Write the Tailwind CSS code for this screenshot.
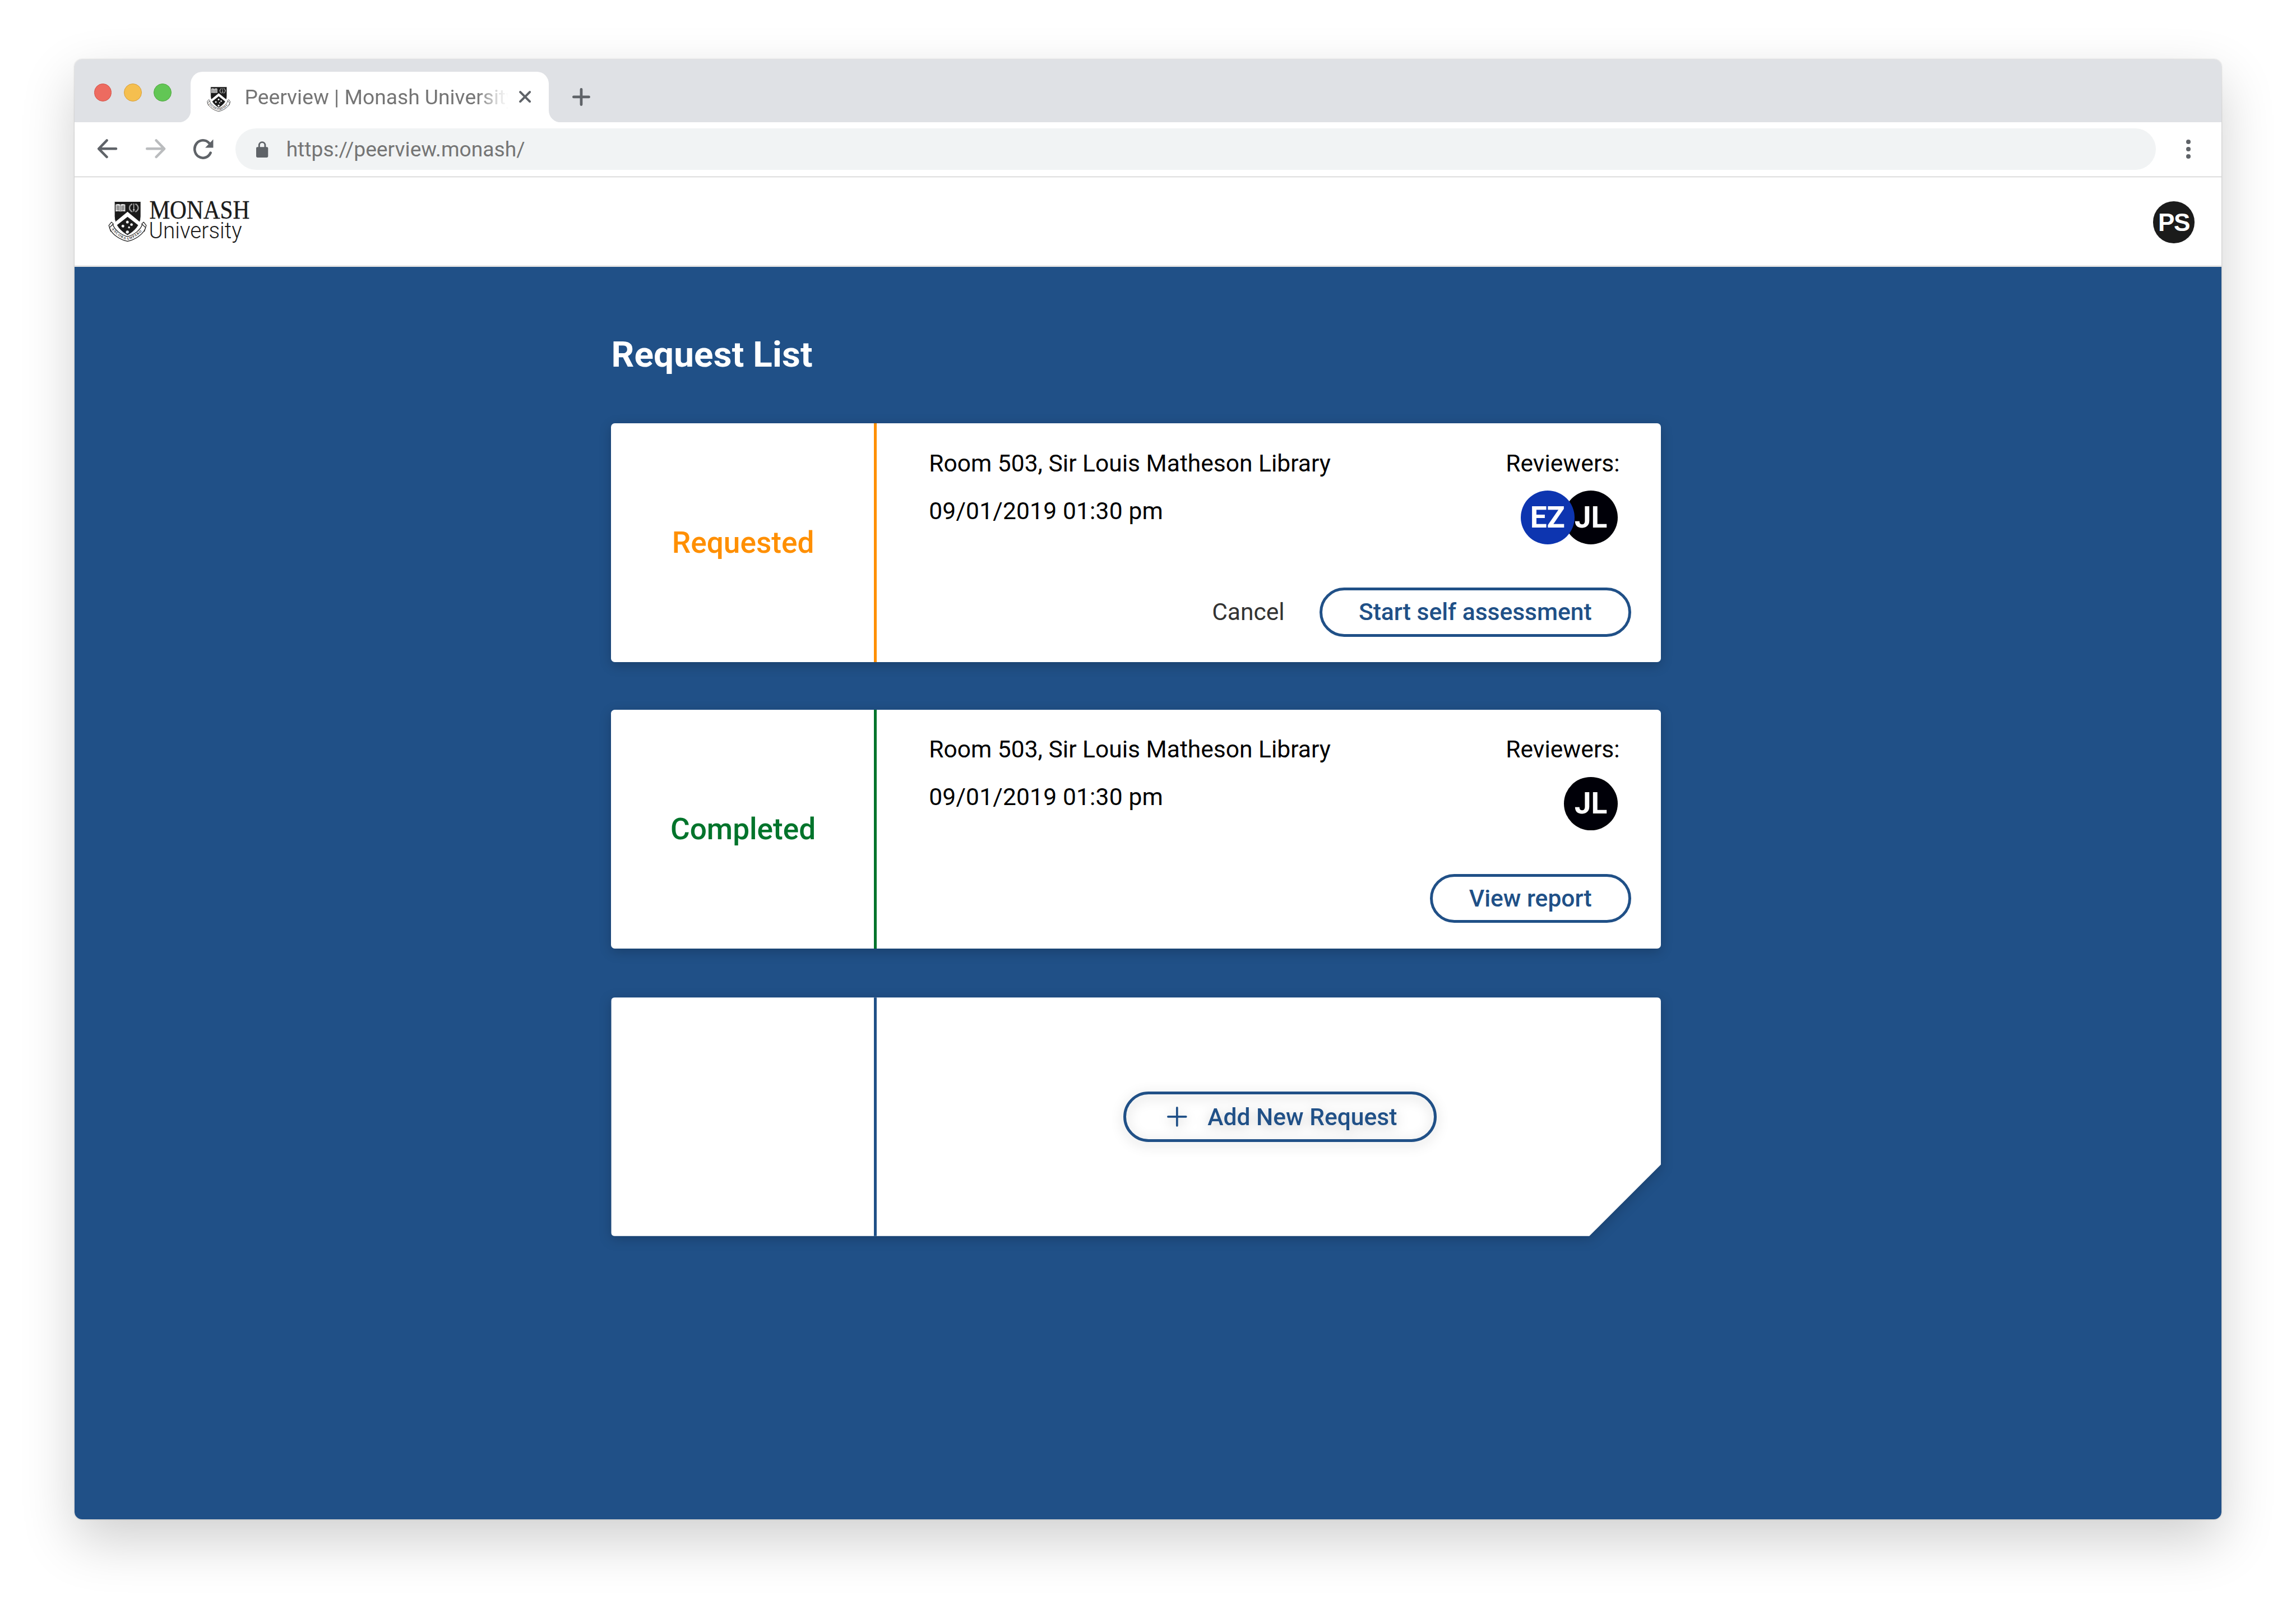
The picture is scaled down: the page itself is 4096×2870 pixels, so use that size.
<!DOCTYPE html>
<html lang="en">
<head>
<meta charset="utf-8">
<title>Peerview | Monash University</title>
<script src="https://cdn.jsdelivr.net/npm/@tailwindcss/browser@4"></script>
</head>
<body class="overflow-hidden bg-white">
<svg class="hidden">
  <defs>
    <clipPath id="shield-clip"><path d="M48 22H207V110C207 166 166 204 127 226C89 204 48 166 48 110Z"/></clipPath>
    <path id="motto-path" d="M27 180C42 214 88 244 127 254C166 244 212 214 227 180"/>
    <symbol id="crest" viewBox="0 0 252 276">
      <!-- motto ribbon -->
      <g fill="#fff" stroke="#1b1b1b" stroke-width="4" stroke-linejoin="round">
        <path d="M30 146L14 166L26 202L36 192L30 172L42 158Z"/><path d="M224 146L240 166L228 202L218 192L224 172L212 158Z"/>
        <path d="M18 180L38 160C48 194 90 224 127 234C164 224 206 194 216 160L236 180C222 222 170 254 127 262C84 254 32 222 18 180Z"/>
      </g>
      <text font-family="Liberation Serif, serif" font-weight="700" font-size="20" fill="#1b1b1b"><textPath href="#motto-path" startOffset="8" textLength="222">ANCORA·IMPARO</textPath></text>
      <!-- shield -->
      <path d="M48 22H207V110C207 166 166 204 127 226C89 204 48 166 48 110Z" fill="#1b1b1b" stroke="#fff" stroke-width="3"/>
      <path d="M127 84L212 154L193 166L127 114L61 166L42 154Z" fill="#fff" clip-path="url(#shield-clip)"/>
      <!-- book -->
      <path d="M55 40C66 36 78 37 84 41C90 37 102 36 113 40V82C102 79 90 80 84 83C78 80 66 79 55 82Z" fill="#e8e8e8"/>
      <path d="M84 41V83M60 47L79 50M60 53L79 56M60 59L79 62M60 65L79 68M60 71L79 74M89 50L108 47M89 56L108 53M89 62L108 59M89 68L108 65M89 74L108 71" stroke="#1b1b1b" stroke-width="2.4" fill="none"/>
      <!-- wreath and sword -->
      <path d="M155 38C134 44 133 76 156 83M175 38C196 44 197 76 174 83" fill="none" stroke="#ddd" stroke-width="8" stroke-dasharray="4 2.2"/>
      <path d="M165 34V76M159 72H171M165 76V84" stroke="#fff" stroke-width="3.4" fill="none"/>
      <!-- southern cross -->
      <g fill="#fff" stroke="#fff" stroke-width="4" stroke-dasharray="3 2">
        <circle cx="126" cy="146" r="7"/><circle cx="99" cy="170" r="7"/><circle cx="151" cy="161" r="6.5"/><circle cx="136" cy="178" r="4.5"/><circle cx="126" cy="206" r="8"/>
      </g>
    </symbol>
  </defs>
</svg>

<div class="h-[1079px] w-[1540px] [zoom:2.65974] bg-white px-[50px] pt-10 font-[Roboto,sans-serif]">
  <div class="flex h-[979px] w-[1440px] flex-col overflow-hidden rounded-[5px] bg-white shadow-[0_14px_36px_rgba(0,0,0,0.19),0_0_1px_rgba(0,0,0,0.25)]">

    <!-- tab strip -->
    <div class="flex h-[42px] shrink-0 bg-[#dfe1e5]">
      <div class="flex w-[78px] gap-2 pt-4 pl-[13px]">
        <span class="size-3 rounded-full border-[0.5px] border-[#d55349] bg-[#ed6b60]"></span>
        <span class="size-3 rounded-full border-[0.5px] border-[#d8a03c] bg-[#f5bf4f]"></span>
        <span class="size-3 rounded-full border-[0.5px] border-[#52a842] bg-[#62c655]"></span>
      </div>
      <div class="relative mt-2 flex h-[34px] w-60 items-center rounded-t-lg bg-white">
        <svg class="absolute bottom-0 -left-2 size-2" viewBox="0 0 8 8"><path d="M8 0V8H0A8 8 0 0 0 8 0Z" fill="#fff"/></svg>
        <svg class="absolute -right-2 bottom-0 size-2" viewBox="0 0 8 8"><path d="M0 0V8H8A8 8 0 0 1 0 0Z" fill="#fff"/></svg>
        <svg class="mt-[2.5px] ml-[10px] h-[18.9px] w-[17.3px]"><use href="#crest"/></svg>
        <span class="mt-[0.6px] ml-[8.8px] w-[177.6px] overflow-hidden text-sm whitespace-nowrap text-[#757575] [mask-image:linear-gradient(to_right,#000_156px,rgba(0,0,0,0.25)_170px,transparent_177px)]">Peerview | Monash University</span>
        <svg class="ml-[6.3px] size-2" viewBox="0 0 8 8"><path d="M.8.8L7.2 7.2M7.2.8L.8 7.2" stroke="#5f6368" stroke-width="1.5" stroke-linecap="round"/></svg>
      </div>
      <svg class="mt-[19px] ml-4 size-3" viewBox="0 0 12 12"><path d="M6 .9V11.1M.9 6H11.1" stroke="#5f6368" stroke-width="1.8" stroke-linecap="round"/></svg>
    </div>

    <!-- toolbar -->
    <div class="flex h-[36.3px] shrink-0 items-center pt-1 pb-[4.3px] text-sm text-[#757575]">
      <svg class="ml-[15px] h-[14px] w-[14px]" viewBox="0 0 14 14"><path d="M12.8 6.9H1.3M6.6 1.3L1.2 6.9L6.6 12.4" fill="none" stroke="#5f6368" stroke-width="1.7" stroke-linecap="round" stroke-linejoin="round"/></svg>
      <svg class="ml-[18.2px] h-[14px] w-[14px]" viewBox="0 0 14 14"><path d="M1.2 6.9H12.7M7.4 1.3L12.8 6.9L7.4 12.4" fill="none" stroke="#babcbe" stroke-width="1.7" stroke-linecap="round" stroke-linejoin="round"/></svg>
      <svg class="ml-[18.2px] h-[14px] w-[14px]" viewBox="0 0 14 14"><path d="M11.9 9.6A5.6 5.9 0 1 1 11 3.2" fill="none" stroke="#5f6368" stroke-width="1.7" stroke-linecap="round"/><path d="M13.7.6V6.2H8.3Z" fill="#5f6368"/></svg>
      <div class="ml-[14.6px] flex h-7 w-[1288px] items-center rounded-full bg-[#f1f3f4]">
        <svg class="mt-[0.5px] ml-[14px] h-[11px] w-2" viewBox="0 0 8 11"><rect y="3.9" width="8" height="7" rx=".8" fill="#5f6368"/><path d="M2 4.2V2.7A2 2.1 0 0 1 6 2.7V4.2" fill="none" stroke="#5f6368" stroke-width="1.1"/></svg>
        <span class="mt-[0.6px] ml-[12px]">https://peerview.monash/</span>
      </div>
      <div class="ml-[20.4px] flex flex-col gap-[1.9px]">
        <span class="size-[3.1px] rounded-full bg-[#5f6368]"></span>
        <span class="size-[3.1px] rounded-full bg-[#5f6368]"></span>
        <span class="size-[3.1px] rounded-full bg-[#5f6368]"></span>
      </div>
    </div>
    <div class="h-[0.7px] shrink-0 bg-[#bfbfbf]"></div>

    <!-- site header -->
    <header class="flex h-[60px] shrink-0 justify-between bg-white pr-[18px] pl-[21.3px] shadow-[inset_0_-1px_0_#e6e5e5]">
      <div class="flex pt-[13.7px]">
        <svg class="h-[30.67px] w-7"><use href="#crest"/></svg>
        <svg class="h-8 w-[70px] overflow-visible" viewBox="99.3 132.7 70 32" fill="#1b1b1b">
          <text x="100.2" y="146.6" font-family="Liberation Serif, serif" font-size="17.2" stroke="#1b1b1b" stroke-width=".15" textLength="67.3" lengthAdjust="spacingAndGlyphs">MONASH</text>
          <text x="99.9" y="159.8" font-family="Roboto, sans-serif" font-weight="300" font-size="15.4" textLength="62.4" lengthAdjust="spacingAndGlyphs">University</text>
        </svg>
      </div>
      <div class="mt-4 flex size-7 items-center justify-center rounded-full bg-[#1b1b1b] pt-[0.8px] font-['Liberation_Sans',Arial,sans-serif] text-[16.6px] font-bold tracking-[-0.6px] text-white">PS</div>
    </header>

    <!-- request list -->
    <main class="flex-1 bg-[#205087] pt-[42.7px] pl-[360px]">
      <h1 class="h-[62.3px] text-2xl leading-8 font-bold tracking-[0.05px] text-white">Request List</h1>

      <section class="flex h-40 w-[704px] overflow-hidden rounded-[2.5px] bg-white shadow-[0_2px_8px_rgba(0,0,0,0.2)]">
        <div class="flex w-44 items-center justify-center pl-[0.8px] text-xl font-medium text-[#ff8f00]">Requested</div>
        <div class="w-0.5 bg-[#ff8f00]"></div>
        <div class="flex flex-1 flex-col pt-[10.6px] pb-[17px] pl-[35.1px] text-base leading-8 text-black">
          <div class="flex justify-between pr-[29px]">
            <div><p>Room 503, Sir Louis Matheson Library</p><p class="tracking-[0.06px]">09/01/2019 01:30 pm</p></div>
            <div class="w-[75px]">
              <p class="whitespace-nowrap">Reviewers:</p>
              <div class="mt-[2.4px] flex justify-end text-xl font-bold text-white">
                <span class="z-10 flex size-9 items-center justify-center rounded-full bg-[#0d35b0]">EZ</span>
                <span class="-ml-[7px] flex size-9 items-center justify-center rounded-full bg-[#000008]">JL</span>
              </div>
            </div>
          </div>
          <div class="mt-auto flex items-center justify-end gap-[23.4px] pr-5">
            <a class="text-[#333]">Cancel</a>
            <button class="flex h-[33px] w-[209px] items-center justify-center rounded-full border-2 border-[#205087] font-medium text-[#205087]">Start self assessment</button>
          </div>
        </div>
      </section>

      <section class="mt-8 flex h-40 w-[704px] overflow-hidden rounded-[2.5px] bg-white shadow-[0_2px_8px_rgba(0,0,0,0.2)]">
        <div class="flex w-44 items-center justify-center pl-[0.8px] text-xl font-medium text-[#00742b]">Completed</div>
        <div class="w-0.5 bg-[#00742b]"></div>
        <div class="flex flex-1 flex-col pt-[10.6px] pb-[17px] pl-[35.1px] text-base leading-8 text-black">
          <div class="flex justify-between pr-[29px]">
            <div><p>Room 503, Sir Louis Matheson Library</p><p class="tracking-[0.06px]">09/01/2019 01:30 pm</p></div>
            <div class="w-[75px]">
              <p class="whitespace-nowrap">Reviewers:</p>
              <div class="mt-[2.4px] flex justify-end text-xl font-bold text-white">
                <span class="flex size-9 items-center justify-center rounded-full bg-[#000008]">JL</span>
              </div>
            </div>
          </div>
          <div class="mt-auto flex items-center justify-end pr-5">
            <button class="flex h-[33px] w-[135px] items-center justify-center rounded-full border-2 border-[#205087] font-medium text-[#205087]">View report</button>
          </div>
        </div>
      </section>

      <div class="mt-[33px] w-[704px] drop-shadow-[0_2px_4px_rgba(0,0,0,0.2)]">
        <section class="flex h-40 overflow-hidden rounded-[2.5px] bg-white [clip-path:polygon(0_0,100%_0,100%_112px,656px_100%,0_100%)]">
          <div class="w-44"></div>
          <div class="w-0.5 bg-[#205087]"></div>
          <div class="flex flex-1 items-center justify-center pl-[15px]">
            <button class="flex h-[34px] w-[210px] items-center rounded-full border-2 border-[#205087] pl-[27.4px] text-base font-medium text-[#205087] drop-shadow-[0_2px_4px_rgba(0,0,0,0.22)]">
              <svg class="size-[13.4px]" viewBox="0 0 13.4 13.4"><path d="M6.7.7V12.7M.7 6.7H12.7" stroke="#205087" stroke-width="1.4" stroke-linecap="round"/></svg>
              <span class="mt-[0.4px] ml-[13.8px]">Add New Request</span>
            </button>
          </div>
        </section>
      </div>
    </main>
  </div>
</div>
</body>
</html>
